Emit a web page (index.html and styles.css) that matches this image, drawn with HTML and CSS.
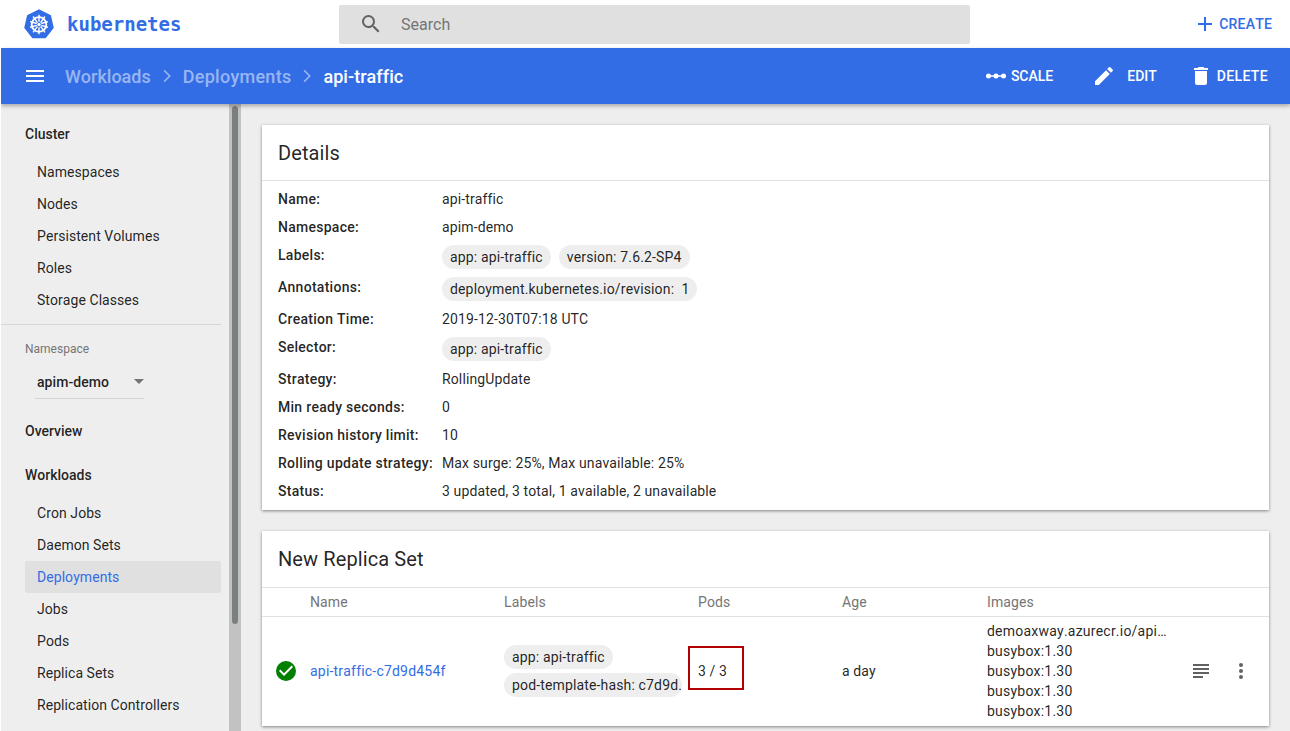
FILE: index.html
```html
<!DOCTYPE html>
<html lang="en">
<head>
<meta charset="utf-8">
<title>Deployment - Kubernetes Dashboard</title>
<link rel="stylesheet" href="styles.css">
</head>
<body>
<div class="app">
  <header class="topbar">
    <a class="brand">
      <svg class="logo" viewBox="0 0 32 32" width="30" height="30">
        <path d="M16 1.500 L27.800 7.200 L30.700 20 L22.500 30.300 L9.500 30.300 L1.300 20 L4.200 7.200 Z" fill="#326de6" stroke="#326de6" stroke-width="2" stroke-linejoin="round"/>
        <g stroke="#fff" fill="none">
          <circle cx="16" cy="16.500" r="7.800" stroke-width="2"/>
          <path d="M16 6v7.500M16 19.500V27M6.500 13.500l7 2M18.500 17.500l7 2M25.500 13.500l-7 2M13.500 17.500l-7 2M9.700 25l4.600-6.500M17.700 14.500l4.600-6.500M22.300 25l-4.600-6.500M14.300 14.500l-4.600-6.500" stroke-width="1.500"/>
          <circle cx="16" cy="16.500" r="1.800" fill="#fff" stroke="none"/>
        </g>
      </svg>
      <span class="wordmark">kubernetes</span>
    </a>
    <div class="search">
      <svg class="search-icon" viewBox="0 0 24 24" width="24" height="24"><path d="M15.500 14h-.79l-.28-.27A6.470 6.470 0 0 0 16 9.500 6.500 6.500 0 1 0 9.500 16c1.610 0 3.090-.59 4.230-1.570l.27.28v.79l5 4.990L20.490 19l-4.990-5zm-6 0C7.010 14 5 11.990 5 9.500S7.010 5 9.500 5 14 7.010 14 9.500 11.990 14 9.500 14z"/></svg>
      <span class="search-text">Search</span>
    </div>
    <a class="create">
      <svg viewBox="0 0 24 24" width="24" height="24"><path d="M19 13h-6v6h-2v-6H5v-2h6V5h2v6h6v2z"/></svg>
      <span>CREATE</span>
    </a>
  </header>

  <div class="actionbar">
    <svg class="menu" viewBox="0 0 24 24" width="24" height="24"><path d="M3 18h18v-2H3v2zm0-5h18v-2H3v2zm0-7v2h18V6H3z"/></svg>
    <nav class="crumbs">
      <a>Workloads</a>
      <svg viewBox="0 0 24 24" width="24" height="24"><path d="M8.500 6.800 9.600 5.700 15.900 12 9.600 18.300 8.500 17.200 13.700 12z"/></svg>
      <a class="crumb-wide">Deployments</a>
      <svg viewBox="0 0 24 24" width="24" height="24"><path d="M8.500 6.800 9.600 5.700 15.900 12 9.600 18.300 8.500 17.200 13.700 12z"/></svg>
      <b>api-traffic</b>
    </nav>
    <div class="actions">
      <a class="act act-scale">
        <svg viewBox="0 0 20 6" width="20" height="6"><path d="M0 3h20" stroke="#fff" stroke-width="1.500"/><circle cx="2.500" cy="3" r="2.500" fill="#fff"/><circle cx="10" cy="3" r="2.500" fill="#fff"/><circle cx="17.500" cy="3" r="2.500" fill="#fff"/></svg>
        <span>SCALE</span>
      </a>
      <a class="act act-edit">
        <svg viewBox="0 0 24 24" width="24" height="24"><path d="M3 17.250V21h3.750L17.810 9.940l-3.750-3.750L3 17.250zM20.710 7.040a1 1 0 0 0 0-1.410l-2.340-2.340a1 1 0 0 0-1.410 0l-1.830 1.830 3.750 3.750 1.830-1.830z"/></svg>
        <span>EDIT</span>
      </a>
      <a class="act act-delete">
        <svg viewBox="0 0 24 24" width="24" height="24"><path d="M6 19c0 1.100.9 2 2 2h8c1.100 0 2-.9 2-2V7H6v12zM19 4h-3.500l-1-1h-5l-1 1H5v2h14V4z"/></svg>
        <span>DELETE</span>
      </a>
    </div>
  </div>

  <div class="main">
    <aside class="sidebar">
      <div class="side-scroll">
        <div class="side-head first">Cluster</div>
        <ul class="side-list">
          <li>Namespaces</li>
          <li>Nodes</li>
          <li>Persistent Volumes</li>
          <li>Roles</li>
          <li>Storage Classes</li>
        </ul>
        <hr class="side-rule">
        <div class="ns">
          <div class="ns-label">Namespace</div>
          <div class="ns-select"><span>apim-demo</span><i class="caret"></i></div>
        </div>
        <div class="side-head overview">Overview</div>
        <div class="side-head workloads">Workloads</div>
        <ul class="side-list">
          <li>Cron Jobs</li>
          <li>Daemon Sets</li>
          <li class="active">Deployments</li>
          <li>Jobs</li>
          <li>Pods</li>
          <li>Replica Sets</li>
          <li>Replication Controllers</li>
        </ul>
      </div>
      <div class="scrollbar"><div class="thumb"></div></div>
    </aside>

    <main class="content">
      <section class="card details">
        <h2 class="card-title">Details</h2>
        <dl class="props">
          <div class="prop"><dt>Name:</dt><dd>api-traffic</dd></div>
          <div class="prop"><dt>Namespace:</dt><dd>apim-demo</dd></div>
          <div class="prop tall"><dt>Labels:</dt><dd><span class="chip">app: api-traffic</span><span class="chip">version: 7.6.2-SP4</span></dd></div>
          <div class="prop tall"><dt>Annotations:</dt><dd><span class="chip">deployment.kubernetes.io/revision:&nbsp; 1</span></dd></div>
          <div class="prop"><dt>Creation Time:</dt><dd>2019-12-30T07:18 UTC</dd></div>
          <div class="prop tall"><dt>Selector:</dt><dd><span class="chip">app: api-traffic</span></dd></div>
          <div class="prop"><dt>Strategy:</dt><dd>RollingUpdate</dd></div>
          <div class="prop"><dt>Min ready seconds:</dt><dd>0</dd></div>
          <div class="prop"><dt>Revision history limit:</dt><dd>10</dd></div>
          <div class="prop"><dt>Rolling update strategy:</dt><dd>Max surge: 25%, Max unavailable: 25%</dd></div>
          <div class="prop"><dt>Status:</dt><dd>3 updated, 3 total, 1 available, 2 unavailable</dd></div>
        </dl>
      </section>

      <section class="card replica">
        <h2 class="card-title">New Replica Set</h2>
        <div class="tbl tbl-head">
          <span></span><span>Name</span><span>Labels</span><span>Pods</span><span>Age</span><span>Images</span><span></span>
        </div>
        <div class="tbl tbl-row">
          <svg class="ok" viewBox="0 0 24 24" width="24" height="24"><path fill="#008000" d="M12 2a10 10 0 1 0 0 20 10 10 0 0 0 0-20z"/><path fill="#fff" d="M10 17l-5-5 1.410-1.410L10 14.170l7.590-7.590L19 8l-9 9z"/></svg>
          <a class="link">api-traffic-c7d9d454f</a>
          <div class="row-labels"><span class="chip">app: api-traffic</span><span class="chip clip">pod-template-hash: c7d9d.</span></div>
          <div class="pods">3 / 3</div>
          <span>a day</span>
          <div class="images"><div>demoaxway.azurecr.io/api…</div><div>busybox:1.30</div><div>busybox:1.30</div><div>busybox:1.30</div><div>busybox:1.30</div></div>
          <div class="row-actions">
            <svg viewBox="0 0 24 24" width="24" height="24"><path d="M14 17H4v2h10v-2zm6-8H4v2h16V9zM4 15h16v-2H4v2zM4 5v2h16V5H4z"/></svg>
            <svg viewBox="0 0 24 24" width="24" height="24"><path d="M12 8a2 2 0 1 0 0-4 2 2 0 0 0 0 4zm0 2a2 2 0 1 0 0 4 2 2 0 0 0 0-4zm0 6a2 2 0 1 0 0 4 2 2 0 0 0 0-4z"/></svg>
          </div>
        </div>
      </section>
    </main>
  </div>
</div>
</body>
</html>
```
FILE: styles.css
```css
*, *::before, *::after { box-sizing: border-box; }
html, body { margin: 0; height: 100%; overflow: hidden; background: #fff; }
body { font-family: Roboto, "Liberation Sans", sans-serif; font-size: 14px; color: rgba(0,0,0,.87); font-kerning: none; font-variant-ligatures: none; letter-spacing: .12px; }
.app { height: 731px; margin-left: 1px; display: flex; flex-direction: column; overflow: hidden; }
a { color: inherit; text-decoration: none; }
svg { display: block; flex: none; }

.topbar { height: 48px; flex: none; display: flex; align-items: center; padding-right: 18px; background: #fff; }
.brand { width: 338px; display: flex; align-items: center; padding-left: 23px; gap: 13px; flex: none; }
.wordmark { font-family: "DejaVu Sans Mono", monospace; font-weight: 700; font-size: 19px; color: #326de6; letter-spacing: 0; }
.search { width: 631px; height: 39px; background: #e0e0e0; border-radius: 2px; display: flex; align-items: center; padding-left: 20px; color: #757575; fill: #616161; gap: 18px; font-size: 16px; letter-spacing: 0; }
.create { margin-left: auto; display: flex; align-items: center; gap: 2px; color: #326de6; fill: #326de6; font-weight: 500; letter-spacing: .2px; }

.actionbar { height: 56px; flex: none; background: #326de6; color: #fff; fill: #fff; display: flex; align-items: center; padding: 0 22px; position: relative; z-index: 2; box-shadow: 0 2px 4px rgba(0,0,0,.3); }
.crumbs { margin-left: 18px; display: flex; align-items: center; font-size: 18px; font-weight: 500; letter-spacing: 0; }
.crumbs a { color: rgba(255,255,255,.5); }
.crumbs svg { fill: rgba(255,255,255,.5); margin: 0 4px; }
.crumbs .crumb-wide { letter-spacing: .27px; }
.crumbs b { font-weight: 500; letter-spacing: .05px; }
.actions { margin-left: auto; display: flex; align-items: center; font-weight: 500; letter-spacing: 0; }
.act { display: flex; align-items: center; }
.act-scale { gap: 5px; }
.act-edit { margin-left: 39px; gap: 11px; }
.act-delete { margin-left: 32px; gap: 4px; letter-spacing: .37px; }

.main { flex: 1; min-height: 0; display: flex; background: #eee; }
.sidebar { width: 240px; flex: none; display: flex; overflow: hidden; letter-spacing: .06px; }
.side-scroll { width: 228px; flex: none; }
.scrollbar { width: 12px; flex: none; background: #c2c2c2; padding: 2px 3px 0; }
.thumb { width: 6px; height: 518px; background: #7c7f80; border-radius: 3px; }
.side-head { font-weight: 500; height: 20px; line-height: 20px; padding-left: 24px; letter-spacing: 0; }
.side-head.first { margin-top: 20px; margin-bottom: 12px; }
.side-head.overview { margin-top: 22px; }
.side-head.workloads { margin-top: 24px; margin-bottom: 12px; }
.side-list { list-style: none; margin: 0; padding: 0 8px 0 24px; }
.side-list li { height: 32px; line-height: 32px; padding-left: 12px; border-radius: 2px; }
.side-list li.active { background: #e0e0e0; color: #326de6; }
.side-rule { border: 0; border-top: 1px solid #d6d6d6; margin: 8px 0 0; width: 220px; }
.ns { padding: 17px 0 0 24px; }
.ns-label { font-size: 12px; line-height: 14px; color: #757575; letter-spacing: 0; }
.ns-select { margin: 9px 0 0 10px; padding-left: 2px; width: 109px; height: 34px; border-bottom: 1px solid #d6d6d6; display: flex; align-items: center; justify-content: space-between; font-weight: 500; }
.caret { width: 0; height: 0; border: 5px solid transparent; border-top-color: #757575; border-bottom: 0; }

.content { flex: 1; min-width: 0; padding: 21px 21px 0; background: #eee; }
.card { background: #fff; box-shadow: 0 1px 3px rgba(0,0,0,.45); }
.card-title { margin: 0; height: 56px; line-height: 56px; padding-left: 16px; font-size: 20px; font-weight: 400; border-bottom: 1px solid #e0e0e0; letter-spacing: .1px; }
.details { height: 385px; }
.replica { margin-top: 21px; }
.replica .card-title { height: 57px; }
.props { margin: 0; padding: 4px 0 0 16px; }
.prop { display: flex; height: 28px; align-items: center; }
.prop.tall { height: 32px; }
.prop.tall dt { margin-top: -4px; }
.prop dt { width: 164px; flex: none; font-weight: 500; letter-spacing: .27px; }
.prop dd { margin: 0; display: flex; gap: 8px; }
.chip { display: inline-block; height: 24px; line-height: 24px; padding: 0 8px; border-radius: 12px; background: #eee; white-space: nowrap; letter-spacing: .15px; }

.tbl { display: grid; grid-template-columns: 48px 194px 194px 144px 145px 184px 1fr; align-items: center; }
.tbl-head { height: 29px; color: #757575; border-bottom: 1px solid #e0e0e0; }
.tbl-row { height: 109px; padding-bottom: 1px; }
.ok { margin-left: 12px; }
.link { color: #326de6; letter-spacing: .2px; }
.row-labels { display: flex; flex-direction: column; align-items: flex-start; gap: 4px; }
.chip.clip { width: 178px; overflow: hidden; }
.pods { position: relative; }
.pods::after { content: ""; position: absolute; left: -10px; top: -17px; width: 56px; height: 44px; border: 2px solid #b00000; }
.images { line-height: 20px; letter-spacing: .22px; }
.row-actions { display: flex; gap: 16px; fill: #616161; margin-left: 18px; }
```
